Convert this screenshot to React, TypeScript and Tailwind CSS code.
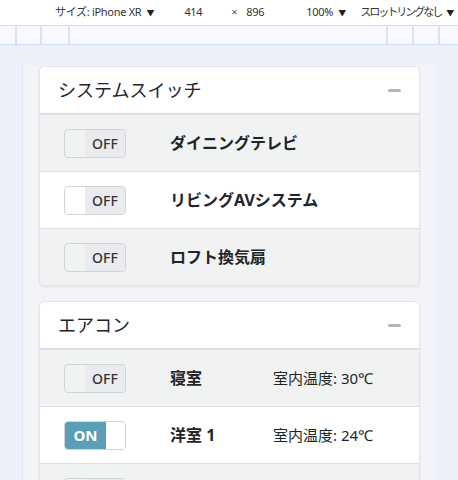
import React from "react";

type Row = { name: string; on: boolean; temp?: string };

const SWITCHES: Row[] = [
  { name: "ダイニングテレビ", on: false },
  { name: "リビングAVシステム", on: false },
  { name: "ロフト換気扇", on: false },
];

const AIRCON: Row[] = [
  { name: "寝室", on: false, temp: "30℃" },
  { name: "洋室 1", on: true, temp: "24℃" },
  { name: "洋室 2", on: false, temp: "26℃" },
];

function Toggle({ on }: { on: boolean }) {
  return (
    <div className="flex h-[29px] w-[62px] overflow-hidden rounded-[4px] border border-[#cfd4d9] shrink-0">
      {on ? (
        <>
          <div className="flex w-[41px] items-center justify-center bg-[#5a9fb5] text-[15px] font-bold text-white">
            ON
          </div>
          <div className="flex-1 bg-white" />
        </>
      ) : (
        <>
          <div className="w-[20px]" />
          <div className="flex flex-1 items-center justify-center bg-[#e9ebee] text-[14px] font-medium text-[#333]">
            OFF
          </div>
        </>
      )}
    </div>
  );
}

function Card({ title, rows }: { title: string; rows: Row[] }) {
  return (
    <div className="overflow-hidden rounded-[5px] border border-[#e2e4e8] bg-white shadow-[0_1px_2px_rgba(0,0,0,0.08)]">
      <div className="flex h-[47px] items-center justify-between border-b border-[#dcdfe3] pl-[18px] pr-[18px]">
        <span className="text-[18px] text-[#212529]">{title}</span>
        <div className="h-[3px] w-[13px] rounded-full bg-[#b3b7bd]" />
      </div>
      {rows.map((r, i) => (
        <div
          key={r.name}
          className={`flex h-[57px] items-center border-t border-[#dcdfe3] pl-6 ${
            i % 2 === 0 ? "bg-[#f1f2f2]" : "bg-white"
          }`}
        >
          <Toggle on={r.on} />
          <span className="ml-[44px] w-[103px] shrink-0 whitespace-nowrap text-[16px] font-bold text-[#212529]">
            {r.name}
          </span>
          {r.temp && (
            <span className="whitespace-nowrap text-[15px] text-[#212529]">室内温度: {r.temp}</span>
          )}
        </div>
      ))}
    </div>
  );
}

function Caret() {
  return <span className="ml-[5px] text-[8px] tracking-normal text-[#222]">▼</span>;
}

export default function App() {
  return (
    <div
      className="h-[480px] w-[458px] overflow-hidden bg-[#edf0f8]"
      style={{ fontFamily: '"Noto Sans", "Noto Sans CJK JP", sans-serif' }}
    >
      {/* devtools toolbar */}
      <div className="flex h-[25px] items-center whitespace-nowrap bg-white text-[11px] tracking-[-0.3px] text-[#333]">
        <span className="ml-[55px] flex shrink-0 items-center">
          サイズ: iPhone XR<Caret />
        </span>
        <span className="ml-[30px] shrink-0">414</span>
        <span className="ml-[29px] shrink-0 text-[#555]">×</span>
        <span className="ml-[9px] shrink-0">896</span>
        <span className="ml-[42px] flex shrink-0 items-center">
          100%<Caret />
        </span>
        <span className="ml-[14px] flex shrink-0 items-center tracking-[-2px]">
          スロットリングなし<Caret />
        </span>
      </div>

      {/* ruler */}
      <div className="flex h-[20px] border-y border-[#d4e0f6] bg-[#f7f9ff]">
        <div className="w-[17px] border-r-2 border-[#d6e2f8]" />
        <div className="w-[25px] border-r-2 border-[#d6e2f8]" />
        <div className="w-[28px] border-r-2 border-[#d6e2f8]" />
        <div className="w-[318px] border-r-2 border-[#d6e2f8]" />
        <div className="w-[26px] border-r-2 border-[#d6e2f8]" />
        <div className="w-[26px] border-r-2 border-[#d6e2f8]" />
        <div className="flex-1" />
      </div>

      {/* device frame */}
      <div className="ml-[22px] mt-[20px] flex w-[414px] flex-col gap-[15px] border-l border-[#e4e6ec] bg-[#f3f4f8] px-4 pb-6 pt-px">
        <Card title="システムスイッチ" rows={SWITCHES} />
        <Card title="エアコン" rows={AIRCON} />
      </div>
    </div>
  );
}
